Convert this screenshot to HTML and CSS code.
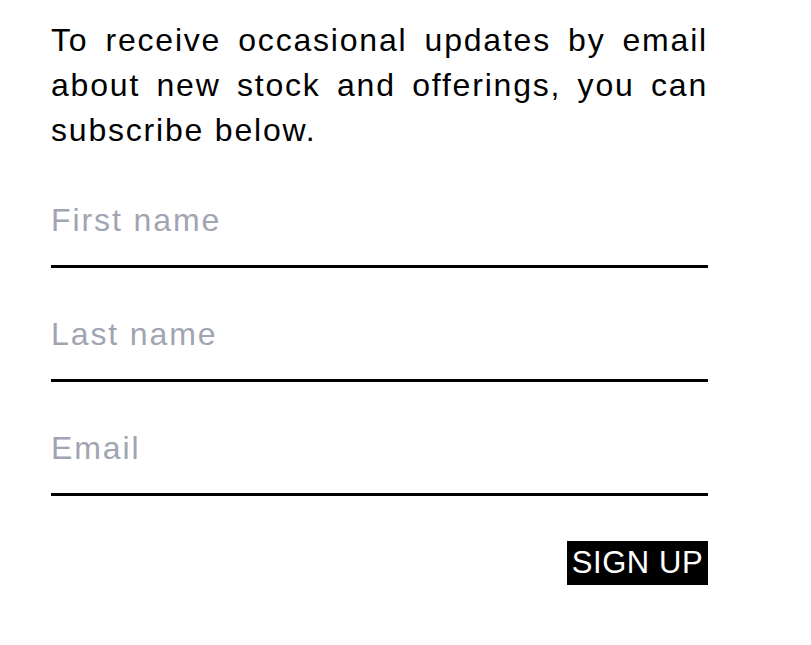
FILE: index.html
```html
<!DOCTYPE html>
<html lang="en">
<head>
<meta charset="utf-8">
<title>Subscribe</title>
<link rel="stylesheet" href="styles.css">
</head>
<body>
<main class="signup">
  <p class="intro">To receive occasional updates by email about new stock and offerings, you can subscribe below.</p>
  <form class="form">
    <input class="field" type="text" placeholder="First name">
    <input class="field" type="text" placeholder="Last name">
    <input class="field" type="email" placeholder="Email">
    <div class="actions">
      <button class="submit" type="button">SIGN UP</button>
    </div>
  </form>
</main>
</body>
</html>
```

FILE: styles.css
```css
html, body {
  margin: 0;
  padding: 0;
  background: #fff;
}

body {
  font-family: "Liberation Sans", Arial, sans-serif;
  color: #000;
}

.signup {
  width: 657px;
  padding: 18px 0 0 51px;
}

.intro {
  margin: 0;
  font-size: 32px;
  line-height: 45px;
  text-align: justify;
  letter-spacing: 1.8px;
}

.form {
  display: flex;
  flex-direction: column;
  padding-top: 43px;
}

.field {
  display: block;
  width: 100%;
  box-sizing: border-box;
  margin: 42px 0 0;
  padding: 2px 0 22px;
  border: 0;
  border-bottom: 3px solid #000;
  border-radius: 0;
  outline: none;
  background: transparent;
  font-family: inherit;
  font-size: 32px;
  line-height: 45px;
  height: 72px;
  color: #000;
  letter-spacing: 1.9px;
}

.field:first-child {
  margin-top: 0;
}

.field::placeholder {
  color: #a1a5b1;
  opacity: 1;
}

.actions {
  display: flex;
  justify-content: flex-end;
  margin-top: 45px;
}

.submit {
  background: #000;
  color: #fff;
  border: 0;
  border-radius: 0;
  margin: 0;
  padding: 0;
  width: 141px;
  height: 44px;
  font-family: inherit;
  font-size: 31px;
  line-height: 44px;
  letter-spacing: 0.6px;
  white-space: nowrap;
  cursor: pointer;
}
```
